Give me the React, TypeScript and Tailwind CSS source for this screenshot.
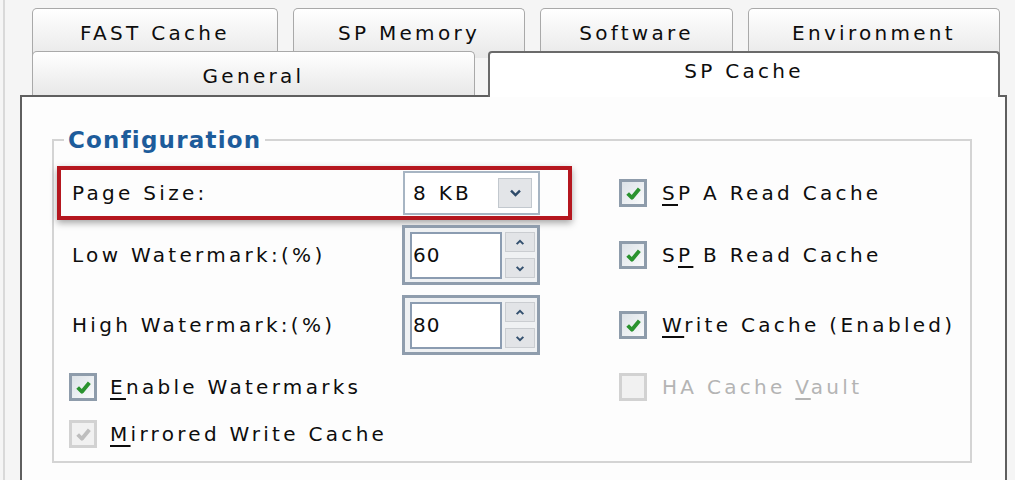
import React from 'react';

function Check({ color }: { color: string }) {
  return (
    <svg viewBox="0 0 16 16" className="w-[17px] h-[17px]">
      <path d="M2.5 8 L6.5 12 L13.5 3.5" fill="none" stroke={color} strokeWidth="3.6" strokeLinejoin="round" />
    </svg>
  );
}

function CheckBox({ checked, disabled }: { checked?: boolean; disabled?: boolean }) {
  return (
    <div
      className={`w-[28px] h-[28px] shrink-0 border-[3px] flex items-center justify-center ${
        disabled ? 'border-[#d2d2d2] bg-[#f1f1f1]' : 'border-[#8e9cab] bg-gradient-to-br from-[#dce2e7] to-[#fafbfc]'
      }`}
    >
      {checked && <Check color={disabled ? '#bdbdbd' : '#2a932f'} />}
    </div>
  );
}

function Caret({ up }: { up?: boolean }) {
  return (
    <svg viewBox="0 0 12 8" className="w-[10px] h-[7px]">
      <path d={up ? 'M2 6 L6 2 L10 6' : 'M2 2 L6 6 L10 2'} fill="none" stroke="#34516f" strokeWidth="2.4" />
    </svg>
  );
}

function Spinner({ value }: { value: string }) {
  return (
    <div className="w-[138px] h-[60px] border-[3px] border-[#8f9dad] bg-[#eff1f3] flex items-center pl-[5px] gap-[3px]">
      <div className="w-[92px] h-[47px] border-2 border-[#8b9cb1] bg-white flex items-center pl-[1px] tracking-[1px]">
        {value}
      </div>
      <div className="flex flex-col gap-[6px]">
        <div className="w-[30px] h-[20px] bg-[#e2e4e7] border border-[#cacdd1] flex items-center justify-center">
          <Caret up />
        </div>
        <div className="w-[30px] h-[20px] bg-[#e2e4e7] border border-[#cacdd1] flex items-center justify-center">
          <Caret />
        </div>
      </div>
    </div>
  );
}

function Tab({ label, className }: { label: string; className: string }) {
  return (
    <div
      className={`border-x border-t border-[#a9a9a9] rounded-t-[5px] bg-gradient-to-b from-white to-[#e8e8e8] text-center leading-[24px] ${className}`}
    >
      {label}
    </div>
  );
}

export default function App() {
  return (
    <div className="w-[1015px] h-[480px] overflow-hidden bg-[#f5f5f5] pl-[3px] font-['DejaVu_Sans',sans-serif] text-[20px] tracking-[3.3px] text-[#0d0d0d]">
      <div className="h-full border-l-2 border-[#d9d9d9] pl-[15px] pt-[8px]">
        {/* back row of tabs */}
        <div className="ml-[12px] flex gap-[15px]">
          <Tab label="FAST Cache" className="w-[246px] h-[50px] pt-[12px]" />
          <Tab label="SP Memory" className="w-[232px] h-[50px] pt-[12px]" />
          <Tab label="Software" className="w-[193px] h-[50px] pt-[12px]" />
          <Tab label="Environment" className="w-[252px] h-[50px] pt-[12px]" />
        </div>
        {/* front row */}
        <div className="ml-[12px] -mt-[7px] flex items-start gap-[13px] relative z-10">
          <Tab label="General" className="w-[443px] h-[44px] pt-[12px]" />
          <div className="w-[512px] h-[46px] border-x-2 border-t-2 border-[#6a6a6a] rounded-t-[4px] bg-white text-center leading-[24px] pt-[6px]">
            SP Cache
          </div>
        </div>

        {/* panel */}
        <div className="w-[987px] h-[400px] -mt-[2px] border-2 border-[#5f5f5f] bg-[#fdfdfd] pt-[31px]">
          <fieldset className="ml-[30px] w-[920px] border-2 border-[#d4d4d4] pt-[14px] pb-[13px] pl-[3px]">
            <legend className="ml-[7px] px-[4px] text-[23px] leading-[24px] font-bold tracking-[1.2px] text-[#1d5c9b]">
              Configuration
            </legend>

            {/* Page Size */}
            <div className="flex items-center h-[54px]">
              <div className="w-[515px] h-[54px] border-4 border-[#b5171f] shadow-[0_3px_7px_rgba(0,0,0,0.35)] flex items-center justify-between pl-[11px] pr-[28px]">
                <span>Page Size:</span>
                <div className="w-[137px] h-[44px] border-2 border-[#a7b5c3] bg-white flex items-center justify-between pl-[8px] pr-[6px]">
                  <span>8 KB</span>
                  <div className="w-[34px] h-[30px] bg-[#e3e5e8] border border-[#c2c8ce] flex items-center justify-center">
                    <svg viewBox="0 0 16 12" className="w-[13px] h-[10px]">
                      <path d="M2.5 3 L8 8.5 L13.5 3" fill="none" stroke="#2e4a69" strokeWidth="3" />
                    </svg>
                  </div>
                </div>
              </div>
              <div className="ml-[47px] flex items-center gap-[15px]">
                <CheckBox checked />
                <span>
                  <span className="underline underline-offset-[4px] decoration-[2px]">S</span>P A Read Cache
                </span>
              </div>
            </div>

            {/* Low watermark */}
            <div className="flex items-center h-[60px] mt-[5px]">
              <div className="w-[515px] flex items-center justify-between pl-[15px] pr-[32px]">
                <span>Low Watermark:(%)</span>
                <Spinner value="60" />
              </div>
              <div className="ml-[47px] flex items-center gap-[15px]">
                <CheckBox checked />
                <span>
                  S<span className="underline underline-offset-[4px] decoration-[2px]">P</span> B Read Cache
                </span>
              </div>
            </div>

            {/* High watermark */}
            <div className="flex items-center h-[60px] mt-[10px]">
              <div className="w-[515px] flex items-center justify-between pl-[15px] pr-[32px]">
                <span>High Watermark:(%)</span>
                <Spinner value="80" />
              </div>
              <div className="ml-[47px] flex items-center gap-[15px]">
                <CheckBox checked />
                <span>
                  <span className="underline underline-offset-[4px] decoration-[2px]">W</span>rite Cache (Enabled)
                </span>
              </div>
            </div>

            {/* Enable watermarks */}
            <div className="flex items-center h-[30px] mt-[17px]">
              <div className="w-[515px] flex items-center gap-[13px] pl-[12px]">
                <CheckBox checked />
                <span>
                  <span className="underline underline-offset-[4px] decoration-[2px]">E</span>nable Watermarks
                </span>
              </div>
              <div className="ml-[47px] flex items-center gap-[15px] text-[#b4b4b4]">
                <CheckBox disabled />
                <span>
                  HA Cache <span className="underline underline-offset-[4px] decoration-[2px]">V</span>ault
                </span>
              </div>
            </div>

            {/* Mirrored */}
            <div className="flex items-center h-[28px] mt-[18px]">
              <div className="w-[515px] flex items-center gap-[13px] pl-[12px]">
                <CheckBox checked disabled />
                <span>
                  <span className="underline underline-offset-[4px] decoration-[2px]">M</span>irrored Write Cache
                </span>
              </div>
            </div>
          </fieldset>
        </div>
      </div>
    </div>
  );
}
